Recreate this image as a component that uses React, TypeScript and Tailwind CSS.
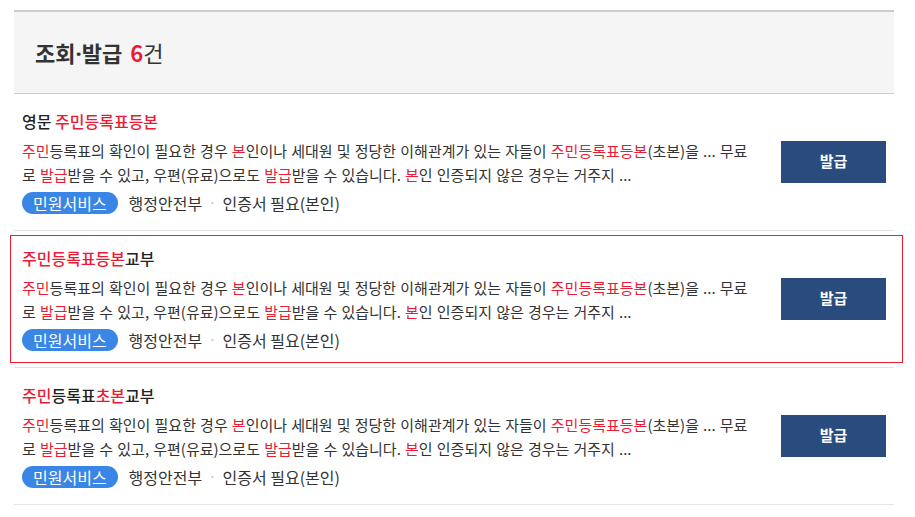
import React from "react";

const R = ({ children }: { children: React.ReactNode }) => (
  <span className="text-[#ec1b35]">{children}</span>
);

function Desc() {
  return (
    <div className="mt-[6px] text-[15px] leading-[24px] text-[#333333] [word-spacing:0.8px]">
      <div className="whitespace-nowrap">
        <R>주민</R>등록표의 확인이 필요한 경우 <R>본</R>인이나 세대원 및 정당한 이해관계가 있는 자들이 <R>주민등록표등본</R>(초본)을 ... 무료
      </div>
      <div className="whitespace-nowrap">
        로 <R>발급</R>받을 수 있고, 우편(유료)으로도 <R>발급</R>받을 수 있습니다. <R>본</R>인 인증되지 않은 경우는 거주지 ...
      </div>
    </div>
  );
}

function Item({ title, highlight }: { title: React.ReactNode; highlight?: boolean }) {
  return (
    <div className="relative flex items-center border-b border-[#e3e3e3] px-2 pt-[15px] pb-4">
      {highlight && (
        <div className="pointer-events-none absolute left-[-4px] right-[-9px] top-[4px] bottom-[4px] border border-[#ee1c2e]" />
      )}
      <div className="min-w-0 flex-1">
        <div className="text-[16px] leading-[24px] font-medium text-[#222222]">{title}</div>
        <Desc />
        <div className="mt-[5px] flex h-[22px] items-center text-[16px] leading-[22px] text-[#333333]">
          <span className="inline-flex h-[22px] items-center rounded-full bg-[#3a86e6] px-[11px] text-white">
            민원서비스
          </span>
          <span className="ml-[11px]">행정안전부</span>
          <span className="mx-[8px] font-['Noto_Sans',sans-serif] text-[#cccccc]">·</span>
          <span>인증서 필요(본인)</span>
        </div>
      </div>
      <button className="ml-4 flex h-[42px] w-[105px] items-center justify-center bg-[#294b7e] text-[15px] font-bold text-white">
        발급
      </button>
    </div>
  );
}

export default function App() {
  return (
    <div className="min-h-[517px] bg-white pt-[10px] font-['Noto_Sans_CJK_KR',sans-serif]">
      <div className="mx-[14px] w-[880px]">
        <div className="flex h-[84px] items-center border-t-2 border-b border-[#cccccc] bg-[#f5f5f5] pl-[21px]">
          <h2 className="text-[22px] font-bold text-[#333333]">
            조회<span className="font-['Noto_Sans',sans-serif]">·</span>발급{" "}
            <span className="ml-[3px] text-[#ec1b35]">6</span>
            <span className="font-normal">건</span>
          </h2>
        </div>
        <Item
          title={
            <>
              영문 <R>주민등록표등본</R>
            </>
          }
        />
        <Item
          highlight
          title={
            <>
              <R>주민등록표등본</R>교부
            </>
          }
        />
        <Item
          title={
            <>
              <R>주민</R>등록표<R>초본</R>교부
            </>
          }
        />
      </div>
    </div>
  );
}
